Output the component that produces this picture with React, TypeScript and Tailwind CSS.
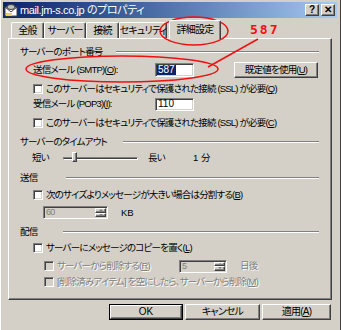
import type { ReactNode } from 'react'

const sunken = 'border border-t-[#808080] border-l-[#808080] border-b-white border-r-white shadow-[inset_1px_1px_0_#404040,inset_-1px_-1px_0_#D4D0C8]'
const raised = 'border border-t-white border-l-white border-b-[#404040] border-r-[#404040] shadow-[inset_-1px_-1px_0_#808080]'
const dis = 'text-[#808080] [text-shadow:1px_1px_0_#fff]'

function Header({ label, line }: { label: string; line: string }) {
  return (
    <div className="flex items-center h-[14px] pr-[12px]">
      <span>{label}</span>
      <div className={`ml-auto h-[2px] border-t border-t-[#808080] border-b border-b-white ${line}`} />
    </div>
  )
}

function Check({ children, disabled, className = '' }: { children: ReactNode; disabled?: boolean; className?: string }) {
  return (
    <div className={`flex items-center ${className}`}>
      <div className={`shrink-0 w-[10px] h-[10px] ${sunken} ${disabled ? 'bg-[#D4D0C8]' : 'bg-white'}`} />
      <span className={`ml-[3px] ${disabled ? dis : ''}`}>{children}</span>
    </div>
  )
}

function Spin({ value, width }: { value: string; width: string }) {
  return (
    <div className={`shrink-0 flex items-center h-[13px] bg-[#D4D0C8] ${sunken} ${width}`}>
      <span className="pl-[2px] text-[#808080] text-[9px] leading-none">{value}</span>
      <div className="ml-auto mr-[1px] flex flex-col w-[11px] h-[9px]">
        <div className={`flex-1 bg-[#D4D0C8] ${raised} flex items-center justify-center`}>
          <div className="w-0 h-0 border-x-[2px] border-x-transparent border-b-[2px] border-b-[#808080]" />
        </div>
        <div className={`flex-1 bg-[#D4D0C8] ${raised} flex items-center justify-center`}>
          <div className="w-0 h-0 border-x-[2px] border-x-transparent border-t-[2px] border-t-[#808080]" />
        </div>
      </div>
    </div>
  )
}

function Tab({ label, w, active }: { label: string; w: string; active?: boolean }) {
  return (
    <div
      className={`shrink-0 flex items-center justify-center border-t border-l border-t-white border-l-white border-r border-r-[#404040] shadow-[inset_-1px_0_0_#808080] rounded-t-[2px] ${w} ${
        active ? 'h-[19px] z-10 bg-[#D4D0C8] -mb-[1px]' : 'h-[16px]'
      }`}
    >
      {label}
    </div>
  )
}

export default function App() {
  return (
    <div className="relative w-[341px] h-[330px] overflow-hidden whitespace-nowrap bg-[#D4D0C8] text-black text-[9.5px] leading-none tracking-[-0.8px] font-['Liberation_Sans','Noto_Sans_CJK_JP',sans-serif] [font-feature-settings:'palt'] flex flex-col pt-[2px] pl-[2px] pr-[3px] border-r border-r-[#404040] border-l border-l-white">
      <div className="h-[16px] flex items-center bg-gradient-to-r from-[#0A246A] to-[#A6CAF0]">
        <svg width="14" height="13" viewBox="0 0 14 13" className="ml-[1px]">
          <rect x="1" y="3" width="12" height="9" fill="#fff" stroke="#404040" />
          <path d="M1 3 L7 8 L13 3" fill="none" stroke="#404040" />
          <rect x="2" y="9" width="6" height="3" fill="#f0d050" />
          <ellipse cx="7" cy="3" rx="4" ry="2.5" fill="#c0c0c0" stroke="#404040" />
        </svg>
        <span className="ml-[2px] text-white text-[11px] tracking-[-0.4px]">mail.jm-s.co.jp のプロパティ</span>
        <div className="ml-auto flex items-center mr-[2px] tracking-normal">
          <div className={`w-[14px] h-[12px] bg-[#D4D0C8] ${raised} flex items-center justify-center text-[10px] font-bold`}>?</div>
          <div className={`ml-[2px] w-[14px] h-[12px] bg-[#D4D0C8] ${raised} flex items-center justify-center text-[10px] font-bold`}>✕</div>
        </div>
      </div>

      <div className="mt-[2px] h-[18px] flex items-end pl-[8px] text-[10px]">
        <Tab label="全般" w="w-[33px]" />
        <Tab label="サーバー" w="w-[42px]" />
        <Tab label="接続" w="w-[33px]" />
        <Tab label="セキュリティ" w="w-[48px]" />
        <Tab label="詳細設定" w="w-[52px] ml-[2px]" active />
      </div>

      <div className="ml-[5px] w-[324px] h-[262px] border border-t-white border-l-white border-b-[#404040] border-r-[#404040] shadow-[inset_-1px_-1px_0_#808080] pt-[6px] pl-[11px] flex flex-col">
        <Header label="サーバーのポート番号" line="w-[203px]" />

        <div className="mt-[2px] h-[18px] flex items-center pl-[13px]">
          <span className="w-[122px]">送信メール (SMTP)(<u>O</u>):</span>
          <div className={`w-[39px] h-[14px] bg-white ${sunken} flex items-center pl-[1px] tracking-normal`}>
            <span className="bg-[#0A246A] text-white px-[1px] text-[10px] leading-[10px]">587</span>
          </div>
          <div className={`ml-[40px] w-[84px] h-[16px] ${raised} flex items-center justify-center`}>既定値を使用(<u>U</u>)</div>
        </div>

        <Check className="mt-[3px] h-[14px] pl-[13px]">このサーバーはセキュリティで保護された接続 (SSL) が必要(<u>Q</u>)</Check>

        <div className="mt-[1px] h-[14px] flex items-center pl-[13px]">
          <span className="w-[122px]">受信メール (POP3)(<u>I</u>):</span>
          <div className={`w-[39px] h-[13px] bg-white ${sunken} flex items-center pl-[2px] text-[10px] tracking-normal`}>110</div>
        </div>

        <Check className="mt-[5px] h-[14px] pl-[13px]">このサーバーはセキュリティで保護された接続 (SSL) が必要(<u>C</u>)</Check>

        <div className="mt-[5px]">
          <Header label="サーバーのタイムアウト" line="w-[196px]" />
        </div>

        <div className="mt-[1px] h-[16px] flex items-center pl-[12px]">
          <span className="w-[31px]">短い</span>
          <div className="relative w-[75px] h-[16px] flex items-center">
            <div className={`w-full h-[3px] ${sunken}`} />
            <div className={`absolute left-[9px] top-[2px] w-[5px] h-[10px] bg-[#D4D0C8] ${raised}`} />
          </div>
          <span className="ml-[10px] w-[45px]">長い</span>
          <span className="tracking-normal">1 分</span>
        </div>

        <div className="mt-[5px]">
          <Header label="送信" line="w-[253px]" />
        </div>

        <Check className="mt-[3px] h-[14px] pl-[13px]">次のサイズよりメッセージが大きい場合は分割する(<u>B</u>)</Check>

        <div className="mt-[4px] h-[13px] flex items-center pl-[23px]">
          <Spin value="60" width="w-[65px]" />
          <span className="ml-[13px] tracking-normal">KB</span>
        </div>

        <div className="mt-[6px]">
          <Header label="配信" line="w-[256px]" />
        </div>

        <Check className="mt-[2px] h-[14px] pl-[13px]">サーバーにメッセージのコピーを置く(<u>L</u>)</Check>

        <div className="mt-[3px] h-[16px] flex items-center pl-[24px]">
          <Check disabled className="w-[135px]">サーバーから削除する(<u>R</u>)</Check>
          <Spin value="5" width="w-[48px]" />
          <span className={`ml-[13px] ${dis}`}>日後</span>
        </div>

        <Check disabled className="mt-[1px] h-[14px] pl-[24px]">[削除済みアイテム] を空にしたら、サーバーから削除(<u>M</u>)</Check>
      </div>

      <div className="mt-[4px] flex justify-end pr-[6px] gap-[2px] text-[10px]">
        <div className="w-[74px] h-[16px] border border-black flex">
          <div className={`flex-1 ${raised} flex items-center justify-center tracking-normal`}>OK</div>
        </div>
        <div className={`w-[75px] h-[16px] ${raised} flex items-center justify-center`}>キャンセル</div>
        <div className={`w-[69px] h-[16px] ${raised} flex items-center justify-center`}>適用(<u>A</u>)</div>
      </div>

      <svg className="absolute inset-0 pointer-events-none" width="341" height="330" viewBox="0 0 341 330">
        <ellipse cx="193" cy="31" rx="34" ry="14" fill="none" stroke="#f01010" strokeWidth="1.5" />
        <ellipse cx="121" cy="69" rx="96" ry="13" fill="none" stroke="#f01010" strokeWidth="1.5" />
        <line x1="257" y1="39" x2="207" y2="67" stroke="#f01010" strokeWidth="1.5" />
      </svg>
      <span className="absolute left-[249px] top-[23px] text-[#f01010] font-bold text-[13px] tracking-[2px] font-['DejaVu_Sans_Mono',monospace]">587</span>
    </div>
  )
}
